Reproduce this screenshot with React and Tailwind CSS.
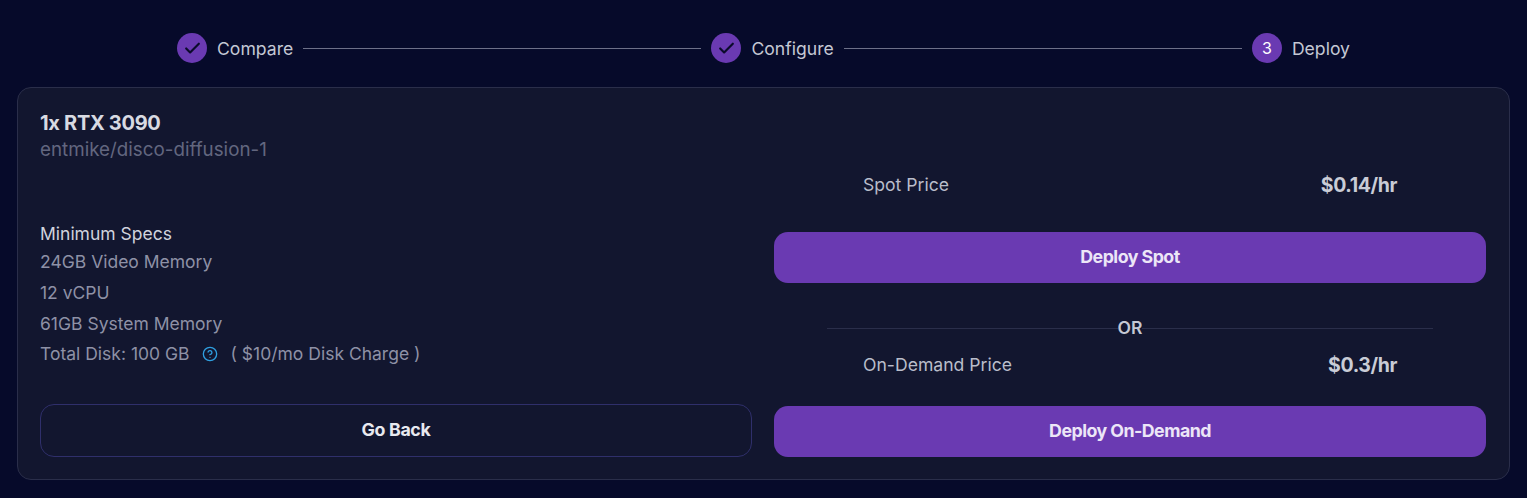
import { Check, CircleHelp } from 'lucide-react'

const SPECS = ['24GB Video Memory', '12 vCPU', '61GB System Memory']

function Step({ label, done, number }) {
  return (
    <div className="flex items-center gap-[10px]">
      <div className="flex h-[30px] w-[30px] items-center justify-center rounded-full bg-[#6a3ab2] text-[16px] text-white">
        {done ? <Check size={19} strokeWidth={2.75} color="#0b0b2b" /> : number}
      </div>
      <span className="pt-px text-[17.6px] leading-[24px] text-[#c4c8d4]">{label}</span>
    </div>
  )
}

function PriceRow({ label, price }) {
  return (
    <div className="flex items-center justify-between pl-[89px] pr-[89px]">
      <span className="text-[17.6px] leading-[24px] text-[#b9bdca]">{label}</span>
      <span className="text-[19.5px] font-bold leading-[24px] tracking-[-0.02em] text-[#c9ccd6]">{price}</span>
    </div>
  )
}

export default function App() {
  return (
    <div className="h-[498px] w-full overflow-hidden bg-[#060a2a] px-[17px] pt-[33px] font-['Inter',sans-serif]">
      {/* Stepper */}
      <div className="flex items-center gap-[10px] pl-[160px] pr-[160px]">
        <Step label="Compare" done />
        <div className="h-px flex-1 bg-[#6d7088]" />
        <Step label="Configure" done />
        <div className="h-px flex-1 bg-[#6d7088]" />
        <Step label="Deploy" number={3} />
      </div>

      {/* Card */}
      <div className="mt-[24px] h-[393px] rounded-[14px] border border-[#2a2e4a] bg-[#12162f] pl-[22px] pr-[23px] pt-[22px]">
        <div className="grid h-full grid-cols-2 gap-x-[22px]">
          <div className="flex flex-col">
            <div className="text-[20px] font-bold leading-[26px] tracking-[-0.015em] text-[#d8dae2]">1x RTX 3090</div>
            <div className="mt-px text-[18.8px] leading-[26px] text-[#62667f]">entmike/disco-diffusion-1</div>

            <div className="mt-[58px] text-[17.5px] leading-[26px] text-[#d0d3dd]">Minimum Specs</div>
            <div className="mt-[2px] flex flex-col gap-[5px]">
              {SPECS.map((s) => (
                <div key={s} className="text-[17.5px] leading-[26px] text-[#8e91a6]">{s}</div>
              ))}
              <div className="-mt-px flex items-center text-[17.5px] leading-[26px] text-[#8e91a6]">
                <span>Total Disk: 100 GB</span>
                <CircleHelp size={16} color="#2f9fe0" className="ml-[12px]" />
                <span className="ml-[13px]">( $10/mo Disk Charge )</span>
              </div>
            </div>

            <button className="mt-[37px] h-[53px] w-full rounded-[14px] border border-[#2f2f6b] text-[17.8px] font-bold tracking-[-0.02em] text-[#e8e9ef]">
              Go Back
            </button>
          </div>

          <div className="flex flex-col pt-[63px]">
            <PriceRow label="Spot Price" price="$0.14/hr" />
            <button className="mt-[35px] h-[51px] w-full rounded-[14px] bg-[#6a3ab2] text-[17.8px] font-bold tracking-[-0.03em] text-[#ece6f7]">
              Deploy Spot
            </button>
            <div className="relative mt-[33px] flex h-[24px] items-center justify-center px-[53px]">
              <div className="h-px w-full bg-[#2a2e4a]" />
              <span className="absolute bg-[#12162f] text-[17.5px] font-semibold leading-[24px] text-[#c4c8d4]">OR</span>
            </div>
            <div className="mt-[13px]">
              <PriceRow label="On-Demand Price" price="$0.3/hr" />
            </div>
            <button className="mt-[29px] h-[51px] w-full rounded-[14px] bg-[#6a3ab2] text-[17.8px] font-bold tracking-[-0.03em] text-[#ece6f7]">
              Deploy On-Demand
            </button>
          </div>
        </div>
      </div>
    </div>
  )
}
